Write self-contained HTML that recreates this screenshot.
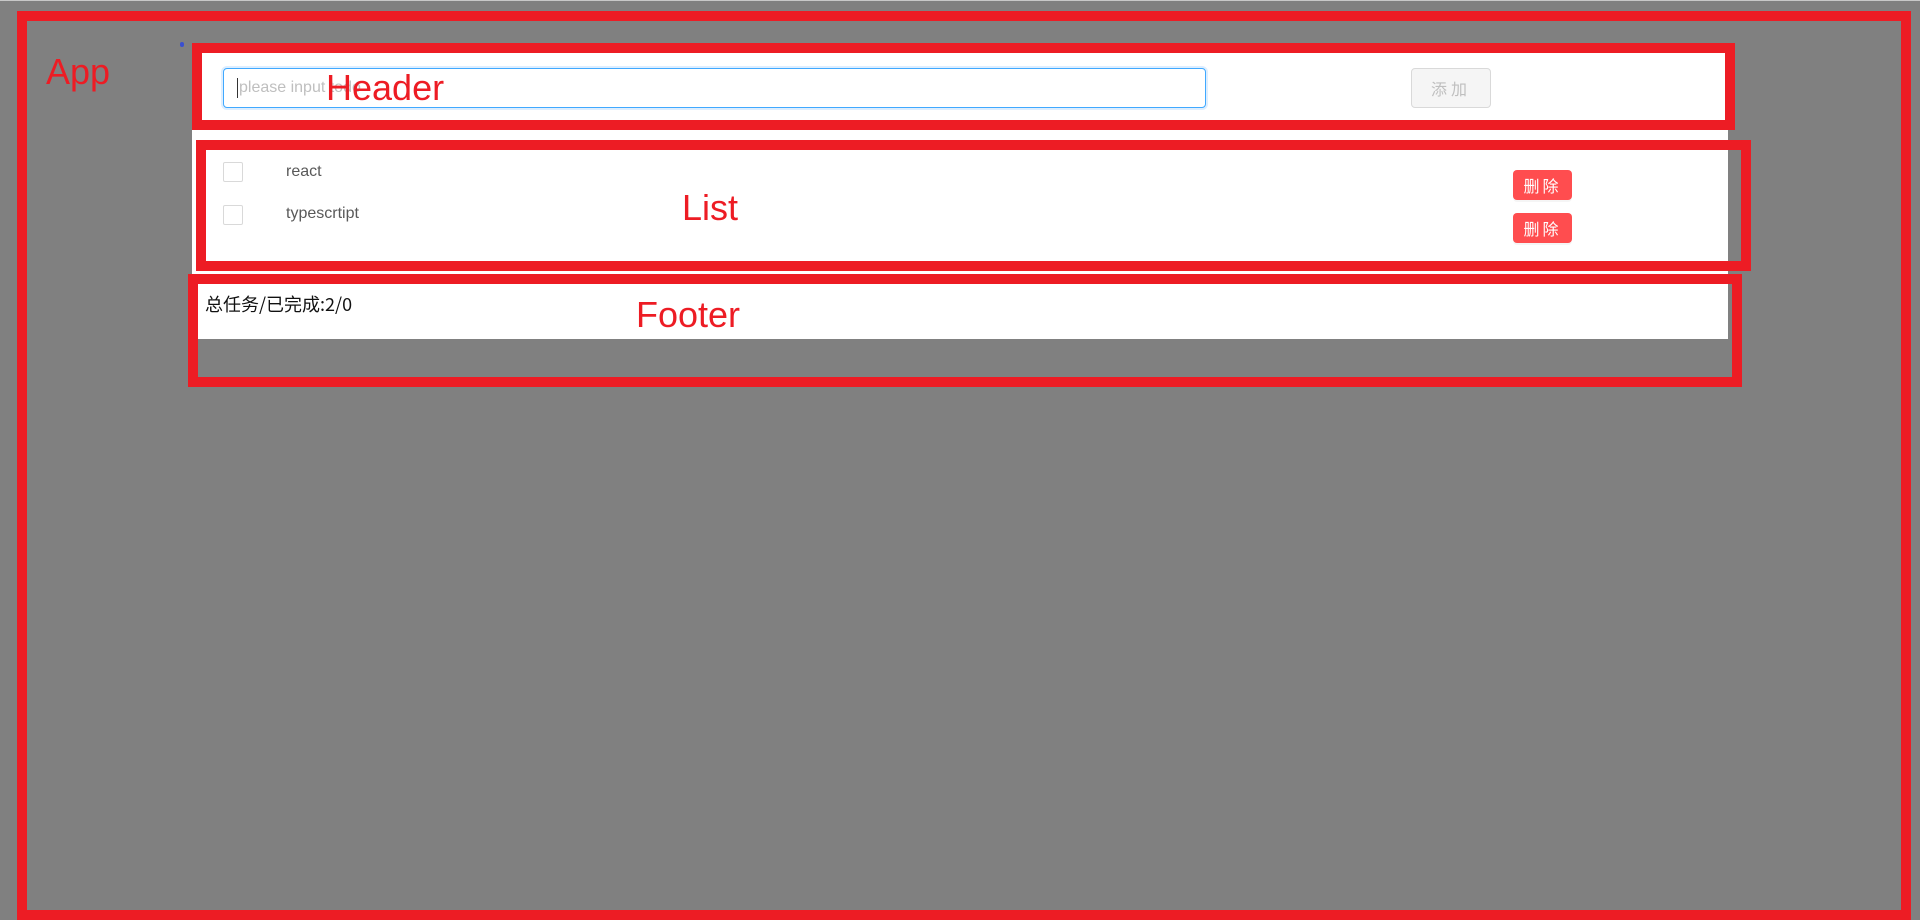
<!DOCTYPE html>
<html><head><meta charset="utf-8"><style>
*{box-sizing:border-box;margin:0;padding:0}
body{width:1920px;height:914px;background:#808080;position:relative;overflow:hidden;font-family:"Liberation Sans","Noto Sans CJK SC",sans-serif}
.a{position:absolute}
.rb{position:absolute;border:10px solid #ed1c24}
.lbl{position:absolute;color:#ed1c24;font-size:36px;line-height:1;font-family:"Liberation Sans","Noto Sans CJK SC",sans-serif}
.cb{position:absolute;width:20px;height:20px;border:1px solid #d9d9d9;border-radius:2px;background:#fff}
.txt{position:absolute;font-size:16px;color:#595959;line-height:20px}
.del{position:absolute;width:59px;height:30px;background:#ff4d4f;border-radius:4px;color:#fff;font-size:16px;line-height:30px;text-align:center;letter-spacing:3px;font-family:"Noto Sans CJK SC",sans-serif;box-shadow:0 2px 0 rgba(0,0,0,.04)}
</style></head><body>
<div class="a" style="left:0;top:0;width:1920px;height:1px;background:#c8c8c8"></div>
<div class="rb" style="left:17px;top:11px;width:1894px;height:909px"></div>
<div class="lbl" style="left:46px;top:54px">App</div>
<div class="a" style="left:180px;top:42px;width:4px;height:5px;border-radius:2px;background:#3a4fd0"></div>
<div class="a" style="left:192px;top:43px;width:1536px;height:296px;background:#fff"></div>
<div class="rb" style="left:192px;top:43px;width:1543px;height:87px"></div>
<div class="a" style="left:223px;top:68px;width:983px;height:40px;border:1px solid #40a9ff;border-radius:4px;box-shadow:0 0 0 2px rgba(24,144,255,.15);background:#fff"></div>
<div class="a" style="left:237px;top:78px;width:1px;height:20px;background:#333"></div>
<div class="a" style="left:239px;top:77px;font-size:16px;color:#bfbfbf;line-height:22px">please input todo</div>
<div class="lbl" style="left:326px;top:70px">Header</div>
<div class="a" style="left:1411px;top:68px;width:80px;height:40px;background:#f5f5f5;border:1px solid #d9d9d9;border-radius:4px;color:#bfbfbf;font-size:16px;line-height:38px;text-align:center;letter-spacing:4px;font-family:'Noto Sans CJK SC',sans-serif">添加</div>
<div class="a" style="left:1728px;top:150px;width:13px;height:111px;background:#808080"></div>
<div class="rb" style="left:196px;top:140px;width:1555px;height:131px"></div>
<div class="cb" style="left:223px;top:162px"></div>
<div class="cb" style="left:223px;top:205px"></div>
<div class="txt" style="left:286px;top:162px">react</div>
<div class="txt" style="left:286px;top:204px">typescrtipt</div>
<div class="lbl" style="left:682px;top:190px">List</div>
<div class="del" style="left:1513px;top:170px">删除</div>
<div class="del" style="left:1513px;top:213px">删除</div>
<div class="a" style="left:1728px;top:284px;width:4px;height:93px;background:#808080"></div>
<div class="rb" style="left:188px;top:274px;width:1554px;height:113px"></div>
<div class="a" style="left:198px;top:284px;width:1530px;height:55px;background:#fff"></div>
<div class="a" style="left:205px;top:292px;font-size:18px;color:#111;line-height:24px;font-family:'Noto Sans CJK SC',sans-serif">总任务/已完成:2/0</div>
<div class="lbl" style="left:636px;top:297px">Footer</div>
</body></html>
